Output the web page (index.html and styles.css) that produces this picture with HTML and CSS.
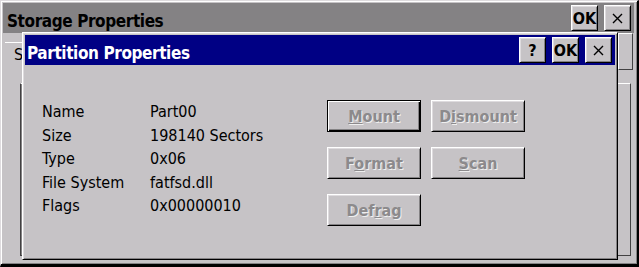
FILE: index.html
```html
<!DOCTYPE html>
<html lang="en">
<head>
    <meta charset="UTF-8">
    <meta name="viewport" content="width=device-width, initial-scale=1.0">
    <title>Storage Properties</title>
    <link rel="stylesheet" href="styles.css">
</head>
<body>
    <div class="window">
        <div class="caption inactive">
            <span class="caption-text">Storage Properties</span>
            <button class="cap-btn">OK</button>
            <button class="cap-btn"><svg width="11" height="11" viewBox="0 0 11 11"><path d="M1 1 L10 10 M10 1 L1 10" stroke="#000" stroke-width="1.4"/></svg></button>
        </div>
        <div class="client">
            <div class="tabstrip">
                <div class="tab">S</div>
                <div class="tab-arrow"></div>
            </div>
            <div class="store-list"></div>
        </div>

        <div class="dialog">
            <div class="caption active">
                <span class="caption-text">Partition Properties</span>
                <button class="cap-btn">?</button>
                <button class="cap-btn">OK</button>
                <button class="cap-btn"><svg width="11" height="11" viewBox="0 0 11 11"><path d="M1 1 L10 10 M10 1 L1 10" stroke="#000" stroke-width="1.4"/></svg></button>
            </div>
            <div class="dialog-body">
                <dl class="props">
                    <dt>Name</dt><dd>Part00</dd>
                    <dt>Size</dt><dd>198140 Sectors</dd>
                    <dt>Type</dt><dd>0x06</dd>
                    <dt>File System</dt><dd>fatfsd.dll</dd>
                    <dt>Flags</dt><dd>0x00000010</dd>
                </dl>
                <div class="actions">
                    <button class="btn default" disabled><u>M</u>ount</button>
                    <button class="btn" disabled>D<u>i</u>smount</button>
                    <button class="btn" disabled>F<u>o</u>rmat</button>
                    <button class="btn" disabled><u>S</u>can</button>
                    <button class="btn" disabled>Def<u>r</u>ag</button>
                </div>
            </div>
        </div>
    </div>
</body>
</html>
```

FILE: styles.css
```css
body {
    margin: 0;
    padding: 0;
    background-color: #c6c3c6;
    font-family: "DejaVu Sans Condensed", "DejaVu Sans", sans-serif;
    font-stretch: condensed;
    font-size: 16px;
    color: #000;
}
.window {
    position: relative;
    width: 639px;
    height: 267px;
    box-sizing: border-box;
    background-color: #c6c3c6;
    border-style: solid;
    border-width: 1px 2px 3px 1px;
    border-color: #dedbde #000 #000 #dedbde;
    box-shadow: inset 1px 1px 0 #fff, inset -1px -1px 0 #848284;
    padding: 2px 3px 0 2px;
}
.caption {
    display: flex;
    align-items: center;
    gap: 6px;
    height: 30px;
    padding-right: 3px;
}
.caption.inactive {
    background-color: #848284;
    padding-left: 4px;
}
.caption.active {
    background-color: #000084;
    padding-left: 2px;
}
.caption-text {
    flex: 1;
    font-weight: bold;
    font-size: 17px;
    letter-spacing: -0.4px;
    padding-top: 5px;
    white-space: nowrap;
}
.caption.active .caption-text {
    color: #fff;
}
.cap-btn {
    width: 27px;
    height: 26px;
    padding: 0;
    display: flex;
    align-items: center;
    justify-content: center;
    font-family: inherit;
    font-stretch: condensed;
    font-weight: bold;
    font-size: 16px;
    color: #000;
    background-color: #c6c3c6;
    border: 1px solid;
    border-color: #fff #000 #000 #fff;
    box-shadow: inset 1px 1px 0 #dedbde, inset -1px -1px 0 #848284;
}
.client {
    padding: 0 1px 0 2px;
}
.tabstrip {
    display: flex;
    height: 37px;
}
.tab {
    flex: 1;
    margin-top: 9px;
    border-top: 1px solid #fff;
    padding: 2px 0 0 9px;
    line-height: 20px;
}
.tab-arrow {
    width: 15px;
    box-sizing: border-box;
    border: 1px solid;
    border-color: #fff #424142 #424142 #fff;
}
.store-list {
    margin: 13px 0 0 15px;
    width: 611px;
    height: 173px;
    box-sizing: border-box;
    border: 1px solid #424142;
    border-top-color: #fff;
    box-shadow: inset 1px 0 0 #848284;
}
.dialog {
    position: absolute;
    left: 21px;
    top: 31px;
    width: 596px;
    height: 228px;
    box-sizing: border-box;
    background-color: #c6c3c6;
    border: 1px solid;
    border-color: #fff #000 #000 #fff;
    box-shadow: inset 1px 1px 0 #dedbde, inset -1px -1px 0 #848284;
    padding: 2px;
}
.dialog-body {
    display: flex;
    padding: 35px 0 0 17px;
}
.props {
    margin: 0;
    display: grid;
    grid-template-columns: 108px 177px;
    grid-auto-rows: 23.5px;
    line-height: 23.5px;
}
.props dt, .props dd {
    margin: 0;
    white-space: nowrap;
}
.actions {
    display: grid;
    grid-template-columns: 94px 94px;
    grid-auto-rows: 32px;
    gap: 15px 10px;
    align-content: start;
}
.btn {
    padding: 0;
    font-family: inherit;
    font-stretch: condensed;
    font-weight: bold;
    font-size: 16px;
    color: #8c8a8c;
    text-shadow: 1px 1px 0 #efefef;
    background-color: #c6c3c6;
    border: 1px solid;
    border-color: #fff #000 #000 #fff;
    box-shadow: inset 1px 1px 0 #dedbde, inset -1px -1px 0 #848284;
}
.btn.default {
    border-color: #000;
    box-shadow: inset 1px 1px 0 #fff, inset -1px -1px 0 #000, inset -2px -2px 0 #848284;
}
```
